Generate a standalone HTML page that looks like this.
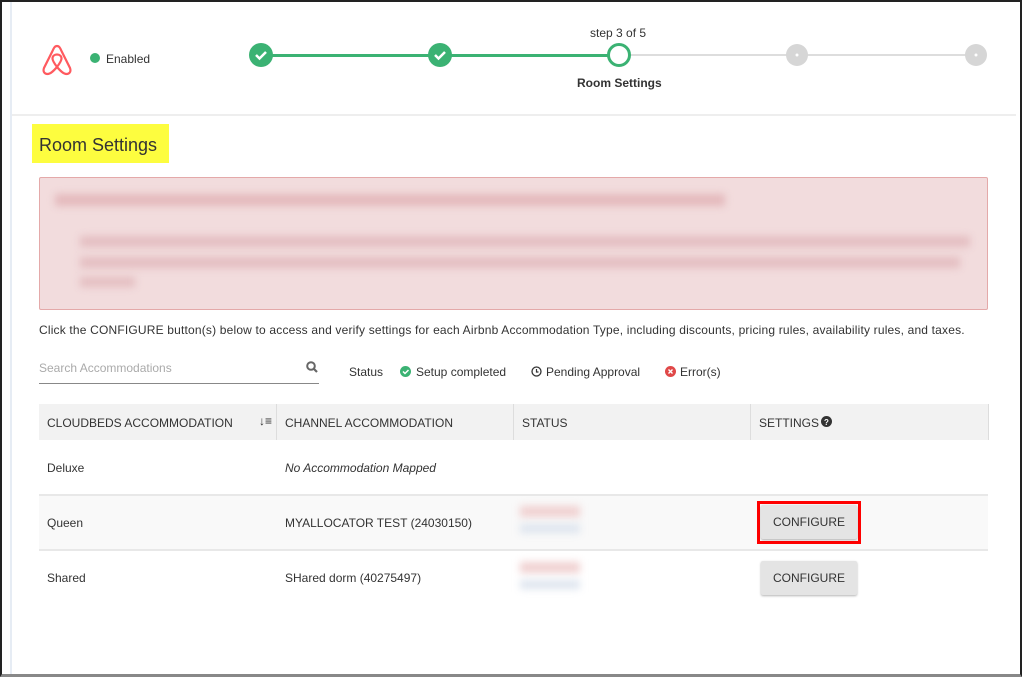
<!DOCTYPE html>
<html><head><style>
*{box-sizing:border-box;margin:0;padding:0}
body{width:1022px;height:677px;background:#fff;font-family:"Liberation Sans",sans-serif;color:#333;position:relative;overflow:hidden;font-size:12px}
.frame{position:absolute;left:0;top:0;width:1022px;height:677px;border:2px solid #222;border-bottom:3px solid #888}
.abs{position:absolute}
.blur{filter:blur(4px)}
.btn{position:absolute;width:96px;height:34px;background:#e4e4e4;border-radius:2px;box-shadow:0 1px 2px rgba(0,0,0,.3);font-size:12px;text-align:center;line-height:34px;color:#333}
.col{position:absolute;top:404px;height:36px;border-left:1px solid #ddd}
.hd{position:absolute;top:416px;font-size:12px;color:#333}
</style></head><body>
<div class="abs" style="left:10px;top:2px;width:2px;height:672px;background:#e6ecf4"></div>
<div class="abs" style="left:12px;top:114px;width:1004px;height:2px;background:#eee"></div>
<svg class="abs" style="left:38px;top:40px" width="38" height="38" viewBox="0 0 38 38"><path d="M19 6c-2 0-3 1.5-4.5 5L6 28c-1.5 4 1 6 3.5 6 3 0 6-3 9.5-7 3.5 4 6.5 7 9.5 7 2.5 0 5-2 3.5-6L23.5 11C22 7.5 21 6 19 6zM19 27c-3-4-4.5-6.5-4.5-8.5 0-2.5 2-4 4.5-4s4.5 1.5 4.5 4c0 2-1.5 4.5-4.5 8.5z" fill="none" stroke="#ff5a5f" stroke-width="2.2"/></svg>
<div class="abs" style="left:90px;top:53px;width:10px;height:10px;border-radius:50%;background:#3bb273"></div>
<div class="abs" style="left:106px;top:52px;font-size:12px;color:#333">Enabled</div>
<div class="abs" style="left:261px;top:54px;width:358px;height:3px;background:#3bb273"></div>
<div class="abs" style="left:619px;top:54px;width:357px;height:2px;background:#ddd"></div>
<svg class="abs" style="left:248px;top:42px" width="26" height="26"><circle cx="13" cy="13" r="12" fill="#3bb273"/><path d="M8 13l3.5 3.5L18 10" stroke="#fff" stroke-width="2.5" fill="none"/></svg>
<svg class="abs" style="left:427px;top:42px" width="26" height="26"><circle cx="13" cy="13" r="12" fill="#3bb273"/><path d="M8 13l3.5 3.5L18 10" stroke="#fff" stroke-width="2.5" fill="none"/></svg>
<svg class="abs" style="left:606px;top:42px" width="26" height="26"><circle cx="13" cy="13" r="10.5" fill="#fff" stroke="#3bb273" stroke-width="3"/></svg>
<svg class="abs" style="left:785px;top:43px" width="24" height="24"><circle cx="12" cy="12" r="11" fill="#d6d6d6"/><circle cx="12" cy="12" r="1.5" fill="#fff"/></svg>
<svg class="abs" style="left:964px;top:43px" width="24" height="24"><circle cx="12" cy="12" r="11" fill="#d6d6d6"/><circle cx="12" cy="12" r="1.5" fill="#fff"/></svg>
<div class="abs" style="left:590px;top:26px;font-size:12px">step 3 of 5</div>
<div class="abs" style="left:577px;top:76px;font-size:12px;font-weight:bold">Room Settings</div>
<div class="abs" style="left:32px;top:124px;width:137px;height:39px;background:#fdfd3f;font-size:18px;line-height:42px;padding-left:7px;color:#333">Room Settings</div>
<div class="abs" style="left:39px;top:177px;width:949px;height:133px;background:#f2dcdd;border:1px solid #e4a9a9;border-radius:2px"></div>
<div class="abs blur" style="left:55px;top:194px;width:670px;height:12px;background:#e4b9bc"></div>
<div class="abs blur" style="left:80px;top:236px;width:890px;height:11px;background:#e4bec1"></div>
<div class="abs blur" style="left:80px;top:257px;width:880px;height:11px;background:#e4bec1"></div>
<div class="abs blur" style="left:80px;top:277px;width:55px;height:10px;background:#e4bec1"></div>
<div class="abs" style="left:39px;top:323px;font-size:12px;letter-spacing:0.18px">Click the CONFIGURE button(s) below to access and verify settings for each Airbnb Accommodation Type, including discounts, pricing rules, availability rules, and taxes.</div>
<div class="abs" style="left:39px;top:361px;font-size:12px;color:#aaa">Search Accommodations</div>
<svg class="abs" style="left:306px;top:361px" width="12" height="12"><circle cx="5" cy="5" r="3.8" stroke="#666" stroke-width="2" fill="none"/><path d="M8 8l3 3" stroke="#666" stroke-width="2.2"/></svg>
<div class="abs" style="left:39px;top:383px;width:280px;height:1px;background:#888"></div>
<div class="abs" style="left:349px;top:365px">Status</div>
<svg class="abs" style="left:400px;top:366px" width="11" height="11"><circle cx="5.5" cy="5.5" r="5.5" fill="#3bb273"/><path d="M3 5.5l2 2 3.5-3.5" stroke="#fff" stroke-width="1.5" fill="none"/></svg>
<div class="abs" style="left:416px;top:365px">Setup completed</div>
<svg class="abs" style="left:531px;top:366px" width="11" height="11"><circle cx="5.5" cy="5.5" r="4.5" fill="none" stroke="#333" stroke-width="1.3"/><path d="M5.5 3v3h2" stroke="#333" stroke-width="1.2" fill="none"/></svg>
<div class="abs" style="left:546px;top:365px">Pending Approval</div>
<svg class="abs" style="left:665px;top:366px" width="11" height="11"><circle cx="5.5" cy="5.5" r="5.5" fill="#e04848"/><path d="M3.5 3.5l4 4M7.5 3.5l-4 4" stroke="#fff" stroke-width="1.4"/></svg>
<div class="abs" style="left:680px;top:365px">Error(s)</div>
<div class="abs" style="left:39px;top:404px;width:949px;height:36px;background:#f2f2f2"></div>
<div class="col" style="left:276px"></div><div class="col" style="left:513px"></div><div class="col" style="left:750px"></div><div class="col" style="left:988px"></div>
<div class="hd" style="left:47px">CLOUDBEDS ACCOMMODATION</div>
<div class="abs" style="left:259px;top:414px;font-size:12px">↓≡</div>
<div class="hd" style="left:285px">CHANNEL ACCOMMODATION</div>
<div class="hd" style="left:522px">STATUS</div>
<div class="hd" style="left:759px">SETTINGS</div>
<svg class="abs" style="left:821px;top:416px" width="11" height="11"><circle cx="5.5" cy="5.5" r="5.5" fill="#333"/><text x="5.5" y="9" font-size="8" fill="#fff" text-anchor="middle" font-weight="bold" font-family="Liberation Sans">?</text></svg>
<div class="abs" style="left:47px;top:461px">Deluxe</div>
<div class="abs" style="left:285px;top:461px;font-style:italic">No Accommodation Mapped</div>
<div class="abs" style="left:39px;top:494px;width:949px;height:2px;background:#e8e8e8"></div>
<div class="abs" style="left:39px;top:496px;width:949px;height:53px;background:#f9f9f9"></div>
<div class="abs" style="left:47px;top:516px">Queen</div>
<div class="abs" style="left:285px;top:516px">MYALLOCATOR TEST (24030150)</div>
<div class="abs blur" style="left:520px;top:506px;width:60px;height:11px;background:#f0d0d0"></div>
<div class="abs blur" style="left:520px;top:524px;width:60px;height:9px;background:#dde4ee"></div>
<div class="abs" style="left:757px;top:501px;width:104px;height:43px;border:3px solid #f00"></div>
<div class="btn" style="left:761px;top:505px">CONFIGURE</div>
<div class="abs" style="left:39px;top:549px;width:949px;height:2px;background:#e8e8e8"></div>
<div class="abs" style="left:47px;top:571px">Shared</div>
<div class="abs" style="left:285px;top:571px">SHared dorm (40275497)</div>
<div class="abs blur" style="left:520px;top:562px;width:60px;height:11px;background:#f0d0d0"></div>
<div class="abs blur" style="left:520px;top:580px;width:60px;height:9px;background:#dde4ee"></div>
<div class="btn" style="left:761px;top:561px">CONFIGURE</div>
<div class="frame"></div>
</body></html>
